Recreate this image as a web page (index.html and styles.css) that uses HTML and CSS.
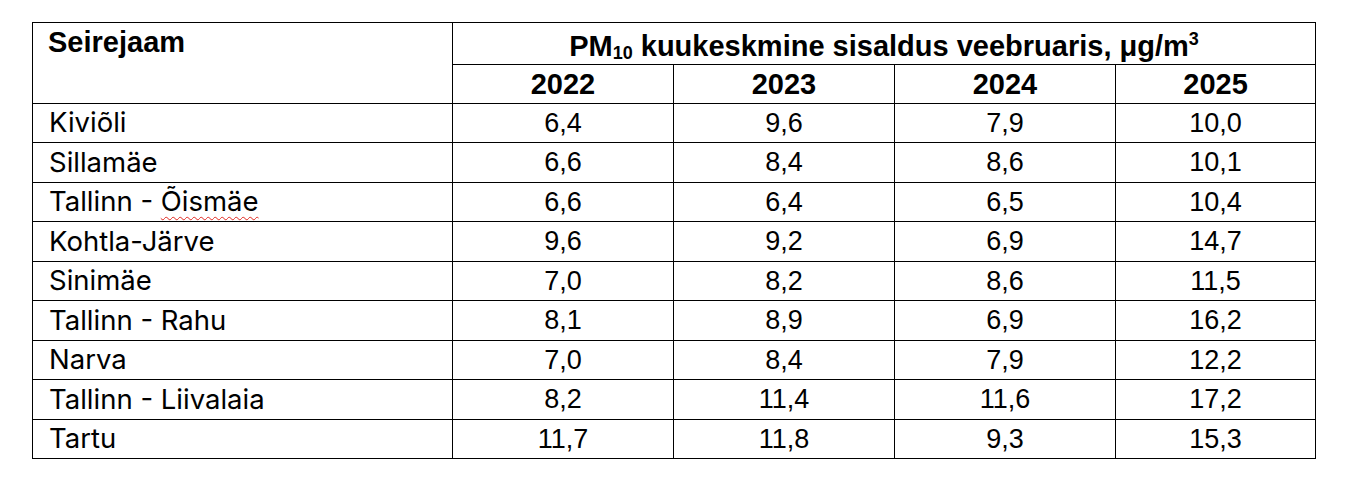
FILE: index.html
```html
<!DOCTYPE html>
<html lang="et">
<head>
<meta charset="utf-8">
<link rel="stylesheet" href="styles.css">
</head>
<body>
<table class="data">
  <colgroup>
    <col class="c-name"><col class="c-year"><col class="c-year"><col class="c-year"><col class="c-last">
  </colgroup>
  <thead>
    <tr class="h1">
      <th rowspan="2" class="station-head">Seirejaam</th>
      <th colspan="4" class="title">PM<sub>10</sub> kuukeskmine sisaldus veebruaris, μg/m<sup>3</sup></th>
    </tr>
    <tr class="h2">
      <th>2022</th><th>2023</th><th>2024</th><th>2025</th>
    </tr>
  </thead>
  <tbody>
    <tr class="ra"><td class="name">Kiviõli</td><td>6,4</td><td>9,6</td><td>7,9</td><td>10,0</td></tr>
    <tr class="rb"><td class="name">Sillamäe</td><td>6,6</td><td>8,4</td><td>8,6</td><td>10,1</td></tr>
    <tr class="ra"><td class="name">Tallinn - <span class="spell">Õismäe</span></td><td>6,6</td><td>6,4</td><td>6,5</td><td>10,4</td></tr>
    <tr class="rb"><td class="name">Kohtla-Järve</td><td>9,6</td><td>9,2</td><td>6,9</td><td>14,7</td></tr>
    <tr class="ra"><td class="name">Sinimäe</td><td>7,0</td><td>8,2</td><td>8,6</td><td>11,5</td></tr>
    <tr class="rb"><td class="name">Tallinn - Rahu</td><td>8,1</td><td>8,9</td><td>6,9</td><td>16,2</td></tr>
    <tr class="ra"><td class="name">Narva</td><td>7,0</td><td>8,4</td><td>7,9</td><td>12,2</td></tr>
    <tr class="rb"><td class="name">Tallinn - Liivalaia</td><td>8,2</td><td>11,4</td><td>11,6</td><td>17,2</td></tr>
    <tr class="ra"><td class="name">Tartu</td><td>11,7</td><td>11,8</td><td>9,3</td><td>15,3</td></tr>
  </tbody>
</table>
</body>
</html>
```
FILE: styles.css
```css
html, body {
  margin: 0;
  padding: 0;
  background: #ffffff;
}
body {
  padding: 22px 0 0 32px;
}
.data {
  border-collapse: collapse;
  table-layout: fixed;
  width: 1284px;
  font-family: "Liberation Sans", Arial, sans-serif;
  color: #000;
}
.c-name { width: 420px; }
.c-year { width: 221px; }
.c-last { width: 200px; }
.data th, .data td {
  border: 1px solid #000;
  padding: 0;
  text-align: center;
  line-height: 1;
}
.data th {
  font-weight: bold;
  font-size: 29px;
}
.h1 { height: 42px; }
.h2 { height: 39px; }
.data th.title {
  padding-top: 6px;
}
.data th.station-head {
  text-align: left;
  vertical-align: top;
  padding: 5px 0 0 15px;
}
.data sub {
  font-size: 18px;
  vertical-align: -3px;
  line-height: 0;
}
.data sup {
  font-size: 18px;
  vertical-align: 11px;
  line-height: 0;
}
.data td {
  font-size: 27px;
}
.ra { height: 39px; }
.rb { height: 40px; }
.data td.name {
  text-align: left;
  padding-left: 16px;
  font-family: Inter, "Noto Sans", sans-serif;
  font-size: 27.5px;
}
.spell {
  text-decoration: underline wavy #e0271f;
  text-decoration-thickness: 1px;
  text-underline-offset: 5px;
}
```
